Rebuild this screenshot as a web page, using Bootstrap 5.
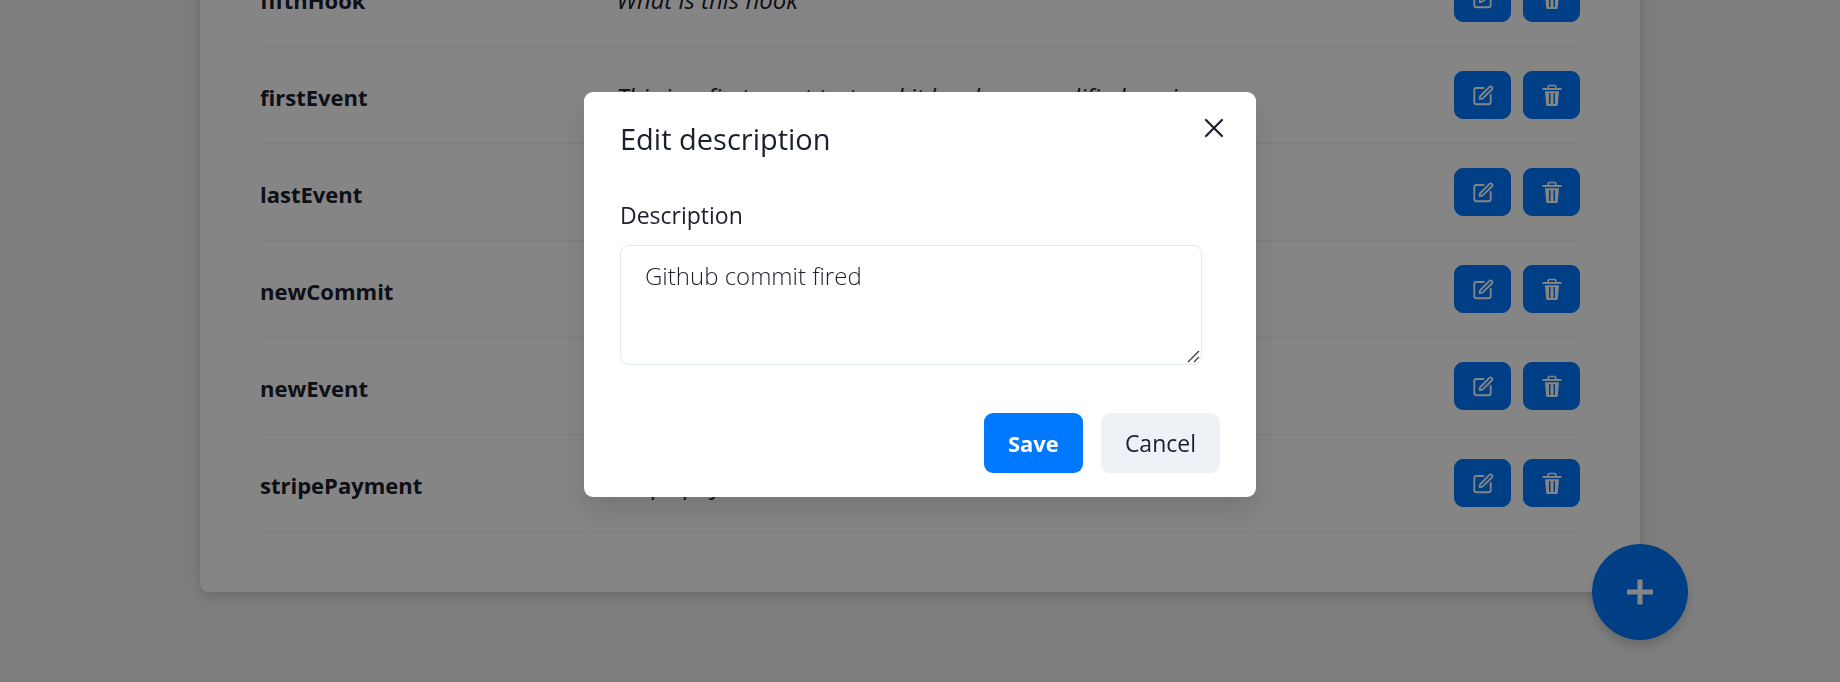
<!DOCTYPE html>
<html lang="en">
<head>
<meta charset="utf-8">
<meta name="viewport" content="width=device-width, initial-scale=1">
<title>Events</title>
<link href="https://cdn.jsdelivr.net/npm/bootstrap@5.3.0/dist/css/bootstrap.min.css" rel="stylesheet">
<style>
  :root {
    --brand: #0078ff;
    --ink: #1a202c;
  }
  body {
    font-family: "Open Sans", "Noto Sans", sans-serif;
    font-size: 23px;
    line-height: 36px;
    color: var(--ink);
    background: #f1f1f1;
  }
  .page-view { height: 100vh; padding-bottom: 90px; }
  .events-card {
    max-width: 1440px;
    padding: 60px;
    border-radius: 9px;
    box-shadow: 0 6px 9px rgba(0, 0, 0, .08), 0 2px 24px rgba(0, 0, 0, .08);
  }
  .events-table { color: var(--ink); border-color: #edf2f7; --bs-table-bg: transparent; }
  .events-table th, .events-table td { padding: 26px 0 22px; color: var(--ink); }
  .events-table .event-actions { width: 138px; padding: 24px 0; }
  .event-name { width: 27%; font-size: 22px; font-weight: 700; }
  .event-text { font-size: 24px; }
  .btn-brand {
    --bs-btn-color: #fff;
    --bs-btn-bg: var(--brand);
    --bs-btn-border-color: var(--brand);
    --bs-btn-hover-color: #fff;
    --bs-btn-hover-bg: #006ae0;
    --bs-btn-hover-border-color: #006ae0;
  }
  .btn-action { width: 57px; height: 48px; border-radius: 9px; }
  .action-group { gap: 12px; }
  .btn-add {
    width: 96px;
    height: 96px;
    right: -48px;
    bottom: -48px;
    box-shadow: 0 6px 9px rgba(0, 0, 0, .15);
  }
  .edit-backdrop { opacity: .48; }
  .edit-dialog { max-width: 672px; margin: 92px auto; }
  .edit-content {
    border: 0;
    border-radius: 9px;
    color: var(--ink);
    box-shadow: 0 15px 30px rgba(0, 0, 0, .12);
  }
  .edit-header { padding: 24px 36px; border: 0; }
  .edit-title { font-size: 29px; line-height: 45px; font-weight: 500; }
  .btn-dismiss { top: 12px; right: 18px; width: 48px; height: 48px; color: var(--ink); border: 0; }
  .edit-body { padding: 12px 36px; }
  .field-label { font-weight: 500; margin-bottom: 12px; }
  .field-text {
    width: 97%;
    height: 120px;
    padding: 12px 24px;
    font-size: 24px;
    font-weight: 300;
    line-height: 36px;
    color: var(--ink);
    border-color: #e2e8f0;
    border-radius: 9px;
    resize: vertical;
  }
  .field-text::-webkit-resizer {
    background: url("data:image/svg+xml,%3Csvg xmlns='http://www.w3.org/2000/svg' width='15' height='15'%3E%3Cpath d='M2 13L13 2M8 13l5-5' stroke='%23444' stroke-width='1.4'/%3E%3C/svg%3E") no-repeat;
  }
  .edit-footer { padding: 36px 36px 24px; gap: 18px; }
  .edit-footer .btn { height: 60px; padding: 0 24px; border: 0; border-radius: 9px; }
  .btn-save { font-size: 22px; font-weight: 700; }
  .btn-quiet {
    font-size: 23px;
    font-weight: 500;
    --bs-btn-color: var(--ink);
    --bs-btn-bg: #edf2f7;
    --bs-btn-hover-bg: #e2e8f0;
  }
</style>
</head>
<body class="overflow-hidden">

<svg class="d-none" aria-hidden="true">
  <symbol id="icon-edit" viewBox="0 0 22 22">
    <path d="M11.500 4H4.500Q2.300 4 2.300 6v12Q2.300 20.300 4.500 20.300h12Q18.700 20.300 18.700 18v-7" fill="none" stroke="currentColor" stroke-width="1.900" stroke-linecap="round"/>
    <path d="M8 12.500L17.200 3.100a1.700 1.700 0 0 1 2.700 2.400L10.500 14.700 7.600 15.200Z" fill="none" stroke="currentColor" stroke-width="1.800" stroke-linejoin="round"/>
  </symbol>
  <symbol id="icon-trash" viewBox="0 0 22 22">
    <path d="M7.200 4.500V2.600Q7.200 1.500 8.300 1.500h5.400q1.100 0 1.100 1.100v1.900" fill="none" stroke="currentColor" stroke-width="1.600"/>
    <path d="M1.500 4h19v1.900h-19z" fill="currentColor"/>
    <path fill-rule="evenodd" fill="currentColor" d="M4 7.200h14l-1.200 13.700Q16.700 22 15.600 22H6.400Q5.300 22 5.200 20.900ZM8 9v11h1.500V9Zm4.500 0v11H14V9Z"/>
  </symbol>
</svg>

<main class="page-view d-flex flex-column justify-content-end align-items-center">
  <section class="events-card bg-white w-100 position-relative">
    <table class="events-table table align-middle mb-0">
      <tbody id="event-rows"></tbody>
    </table>
    <button type="button" class="btn btn-brand btn-add rounded-circle position-absolute d-flex align-items-center justify-content-center p-0" aria-label="Add event">
      <svg width="28" height="26" viewBox="0 0 28 26" aria-hidden="true"><path d="M1 13h26M14 0.500v25" stroke="currentColor" stroke-width="5"/></svg>
    </button>
  </section>
</main>

<div class="modal-backdrop edit-backdrop"></div>
<div class="modal d-block" tabindex="-1" role="dialog" aria-modal="true" aria-labelledby="edit-title">
  <div class="modal-dialog edit-dialog">
    <form class="modal-content edit-content">
      <div class="modal-header edit-header">
        <h1 class="modal-title edit-title" id="edit-title">Edit description</h1>
        <button type="button" class="btn btn-dismiss position-absolute p-0 d-flex align-items-center justify-content-center" aria-label="Close">
          <svg width="20" height="20" viewBox="0 0 20 20" aria-hidden="true"><path d="M2 2l16 16M18 2L2 18" stroke="currentColor" stroke-width="2.200" stroke-linecap="round"/></svg>
        </button>
      </div>
      <div class="modal-body edit-body">
        <label class="field-label d-block" for="description">Description</label>
        <textarea class="form-control field-text" id="description">Github commit fired</textarea>
      </div>
      <div class="edit-footer d-flex justify-content-end">
        <button type="button" class="btn btn-brand btn-save">Save</button>
        <button type="button" class="btn btn-quiet">Cancel</button>
      </div>
    </form>
  </div>
</div>

<script src="https://cdn.jsdelivr.net/npm/bootstrap@5.3.0/dist/js/bootstrap.bundle.min.js"></script>
<script>
  const events = [
    ["fifthHook", "What is this hook"],
    ["firstEvent", "This is a first event test and it has been modified again"],
    ["lastEvent", ""],
    ["newCommit", "Github commit fired"],
    ["newEvent", ""],
    ["stripePayment", "Stripe payment"]
  ];
  const action = (label, icon) =>
    `<button type="button" class="btn btn-brand btn-action p-0 d-flex align-items-center justify-content-center" aria-label="${label}">
      <svg width="22" height="22" aria-hidden="true"><use href="#${icon}"/></svg>
    </button>`;
  document.getElementById("event-rows").innerHTML = events.map(([name, text]) =>
    `<tr>
      <th scope="row" class="event-name">${name}</th>
      <td class="event-text fst-italic">${text}</td>
      <td class="event-actions"><div class="action-group d-flex justify-content-end">${action("Edit " + name, "icon-edit")}${action("Delete " + name, "icon-trash")}</div></td>
    </tr>`).join("");
</script>
</body>
</html>
